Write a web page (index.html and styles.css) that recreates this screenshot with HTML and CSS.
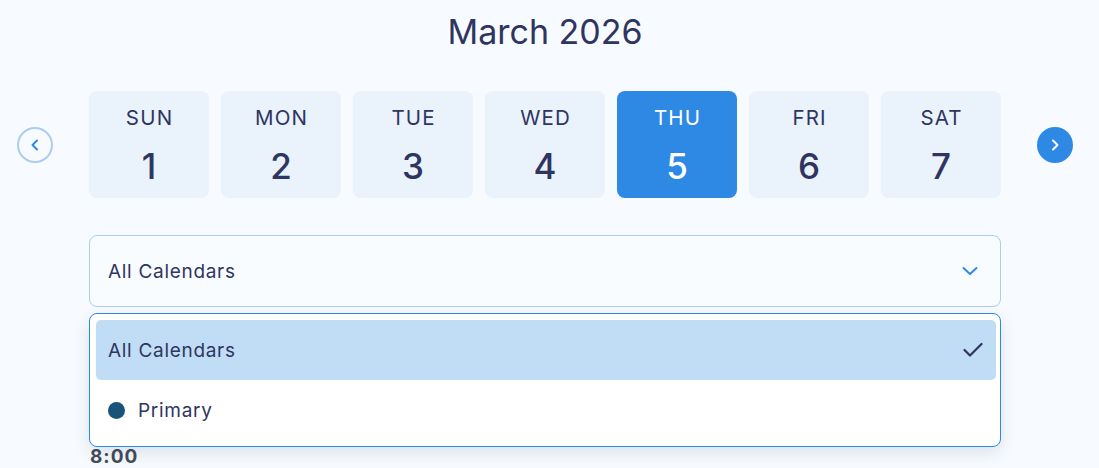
FILE: index.html
```html
<!DOCTYPE html>
<html lang="en">
<head>
<meta charset="utf-8">
<title>March 2026</title>
<link rel="stylesheet" href="styles.css">
</head>
<body>
<div class="page">
  <h1 class="title">March 2026</h1>
  <div class="week">
    <button class="nav nav-prev" aria-label="Previous week">
      <svg width="14" height="14" viewBox="0 0 14 14"><polyline points="9,2.5 4.5,7 9,11.5" fill="none" stroke="#2e89e5" stroke-width="2" stroke-linecap="round" stroke-linejoin="round"/></svg>
    </button>
    <div class="days">
      <div class="day"><span class="dname">SUN</span><span class="dnum">1</span></div>
      <div class="day"><span class="dname">MON</span><span class="dnum">2</span></div>
      <div class="day"><span class="dname">TUE</span><span class="dnum">3</span></div>
      <div class="day"><span class="dname">WED</span><span class="dnum">4</span></div>
      <div class="day active"><span class="dname">THU</span><span class="dnum">5</span></div>
      <div class="day"><span class="dname">FRI</span><span class="dnum">6</span></div>
      <div class="day"><span class="dname">SAT</span><span class="dnum">7</span></div>
    </div>
    <button class="nav nav-next" aria-label="Next week">
      <svg width="14" height="14" viewBox="0 0 14 14"><polyline points="5,2.5 9.5,7 5,11.5" fill="none" stroke="#ffffff" stroke-width="2" stroke-linecap="round" stroke-linejoin="round"/></svg>
    </button>
  </div>
  <div class="content">
    <div class="select-wrap">
      <div class="select">
        <span class="select-text">All Calendars</span>
        <svg class="select-chev" width="16" height="10" viewBox="0 0 16 10"><polyline points="1.5,2 8,8 14.5,2" fill="none" stroke="#2e89e5" stroke-width="2" stroke-linecap="round" stroke-linejoin="round"/></svg>
      </div>
      <div class="menu">
        <div class="option selected">
          <span class="opt-text">All Calendars</span>
          <svg class="check" width="20" height="16" viewBox="0 0 20 16"><polyline points="1.5,8 7,13.5 18.5,2" fill="none" stroke="#2f3561" stroke-width="2.2" stroke-linecap="round" stroke-linejoin="round"/></svg>
        </div>
        <div class="option">
          <span class="dot"></span>
          <span class="opt-text">Primary</span>
        </div>
      </div>
    </div>
    <div class="schedule">
      <div class="time">8:00</div>
    </div>
  </div>
</div>
</body>
</html>
```

FILE: styles.css
```css
* { box-sizing: border-box; }
html, body {
  margin: 0;
  padding: 0;
  background: #f7fbff;
}
body {
  font-family: Inter, "Noto Sans", sans-serif;
  color: #2f3561;
  overflow: hidden;
}
.page {
  width: 1090px;
  height: 468px;
}
.title {
  margin: 12px 0 0;
  font-size: 34px;
  line-height: 40px;
  font-weight: 400;
  text-align: center;
  color: #2f3561;
}
.week {
  margin-top: 39px;
  display: flex;
  align-items: center;
  justify-content: center;
  gap: 36px;
}
.nav {
  width: 36px;
  height: 36px;
  border-radius: 50%;
  padding: 0;
  display: flex;
  align-items: center;
  justify-content: center;
  cursor: pointer;
}
.nav-prev {
  background: #f7fbff;
  border: 2.5px solid #aacdf0;
}
.nav-next {
  background: #2e89e5;
  border: none;
}
.days {
  display: grid;
  grid-template-columns: repeat(7, 120px);
  gap: 12px;
}
.day {
  height: 107px;
  border-radius: 8px;
  background: #eaf2fc;
  display: flex;
  flex-direction: column;
  align-items: center;
  padding-top: 15px;
  color: #2f3561;
}
.day.active {
  background: #2e89e5;
  color: #ffffff;
}
.dname {
  font-size: 20.5px;
  line-height: 24px;
  font-weight: 400;
  letter-spacing: 1.2px;
  margin-right: -1.2px;
}
.dnum {
  margin-top: 16px;
  font-size: 35px;
  line-height: 40px;
  font-weight: 500;
}
.content {
  width: 912px;
  margin: 37px 0 0 89px;
}
.select-wrap {
  position: relative;
}
.select {
  height: 72px;
  border: 1px solid #aacdf0;
  border-radius: 8px;
  background: #f9fcff;
  display: flex;
  align-items: center;
  justify-content: space-between;
  padding: 0 22px 0 18px;
}
.select-text {
  font-size: 19px;
  line-height: 24px;
  letter-spacing: 0.7px;
  padding-top: 2px;
}
.menu {
  position: absolute;
  left: 0;
  right: 0;
  top: 78px;
  height: 134px;
  background: #ffffff;
  border: 1px solid #2e89e5;
  border-radius: 8px;
  padding: 6px 4px 6px 6px;
  box-shadow: 0 6px 16px rgba(30, 50, 90, 0.12);
  z-index: 2;
}
.option {
  height: 60px;
  display: flex;
  align-items: center;
  padding: 0 12px 0 12px;
  border-radius: 5px;
  font-size: 19px;
  letter-spacing: 0.7px;
}
.option.selected {
  background: #c1ddf6;
  justify-content: space-between;
  padding-right: 13px;
}
.opt-text {
  line-height: 24px;
  padding-top: 2px;
}
.dot {
  width: 17px;
  height: 17px;
  border-radius: 50%;
  background: #19537a;
  margin-right: 13px;
}
.schedule {
  margin-top: 138px;
}
.time {
  font-size: 19px;
  line-height: 24px;
  font-weight: 700;
  letter-spacing: 1px;
  color: #454b57;
  padding-left: 1px;
}
```
